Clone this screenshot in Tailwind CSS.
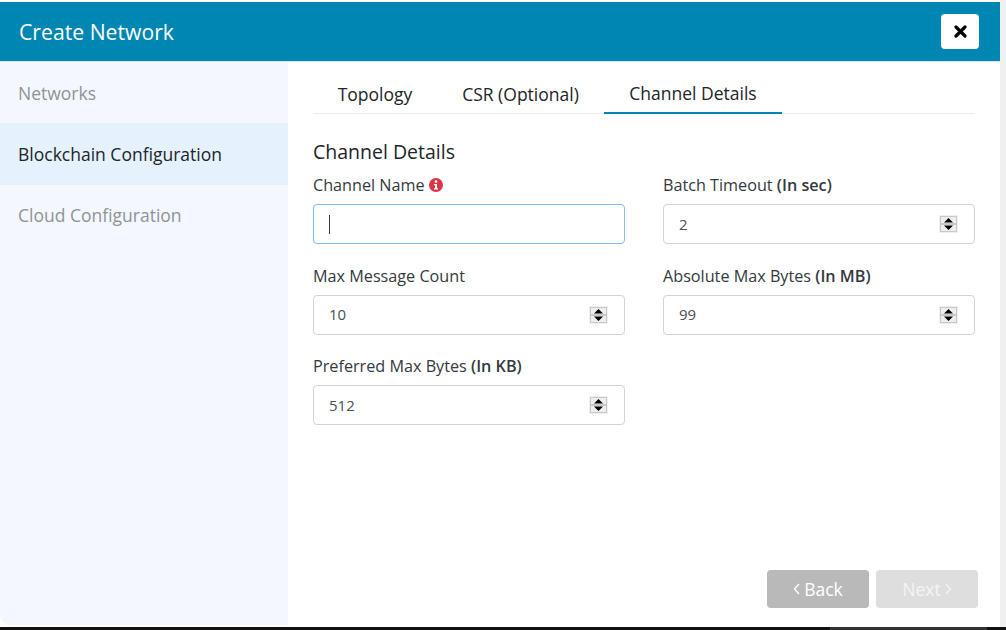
<!doctype html>
<html>
<head>
<meta charset="utf-8">
<script src="https://cdn.jsdelivr.net/npm/@tailwindcss/browser@4"></script>
</head>
<body class="m-0 overflow-hidden bg-white font-['Open_Sans',sans-serif]">
<div class="flex h-[630px] w-[1006px] flex-col overflow-hidden">
  <div class="flex flex-1 min-h-0">
    <div class="flex h-[627px] w-[1000px] flex-col pt-[2px]">
      <header class="flex h-[60px] shrink-0 items-center justify-between border-b border-[#dee2e6] bg-[#0086b3] pl-[19px] pr-[21px]">
        <h1 class="pt-[1px] text-[21.2px] font-normal text-white">Create Network</h1>
        <button class="-mt-[1px] flex h-[35px] w-[38px] items-center justify-center rounded-[4px] bg-white">
          <svg width="13" height="13" viewBox="0 0 13 13"><path d="M2 2 L11 11 M11 2 L2 11" stroke="#000" stroke-width="3.2" stroke-linecap="round"/></svg>
        </button>
      </header>
      <div class="flex min-h-0 flex-1">
        <nav class="h-[563px] w-[288px] shrink-0 rounded-bl-[10px] bg-[#f4f8fe] text-[17.5px]">
          <div class="flex h-[61px] items-center pl-[18px] pt-[2px] text-[#8f9398]">Networks</div>
          <div class="flex h-[62px] items-center bg-[#e5f1fd] pl-[18px] text-[#212529]">Blockchain Configuration</div>
          <div class="flex h-[61px] items-center pl-[18px] text-[#8f9398]">Cloud Configuration</div>
        </nav>
        <main class="relative flex-1 pl-[25px] pr-[25px]">
          <div class="flex h-[52px] items-end border-b border-[#e9ecef] text-[17.5px] text-[#212529]">
            <div class="flex w-[124px] justify-center pb-[6px]">Topology</div>
            <div class="flex w-[167px] justify-center pb-[6px]">CSR (Optional)</div>
            <div class="-mb-px flex w-[178px] justify-center border-b-2 border-[#0086b3] pb-[6px]">Channel Details</div>
          </div>
          <h2 class="mt-[24px] text-[19.5px] leading-[27px] font-normal text-[#212529]">Channel Details</h2>
          <div class="mt-[10px] grid grid-cols-[312px_312px] gap-x-[38px] gap-y-[21.5px] text-[16.2px] text-[#343a40]">
            <label class="block">
              <span class="flex h-[20px] items-center gap-[4px] leading-[20px]">Channel Name
                <svg width="14" height="14" viewBox="0 0 14 14"><circle cx="7" cy="7" r="7" fill="#dc3545"/><circle cx="7" cy="3.6" r="1.4" fill="#fff"/><path d="M5 6h3v4.2h1v1.3H5v-1.3h1V7.3H5z" fill="#fff"/></svg>
              </span>
              <div class="mt-[9px] flex h-[40px] items-center rounded-[4px] border border-[#80bdff] bg-white pl-[15px]"><span class="h-[19px] w-px bg-[#343a40]"></span></div>
            </label>
            <label class="block">
              <span class="flex h-[20px] items-center leading-[20px]"><span>Batch Timeout <b class="font-semibold">(In sec)</b></span></span>
              <div class="mt-[9px] flex h-[40px] items-center justify-between rounded-[4px] border border-[#ced4da] bg-white pl-[15px] pr-[16px] text-[15px] text-[#495057]">2
                <svg width="19" height="18" viewBox="0 0 19 18" shape-rendering="crispEdges"><rect width="19" height="18" fill="#f0f0f0"/><rect x="1" y="1" width="17" height="16" fill="#c8c8c8"/><rect x="2" y="2" width="15" height="6" fill="#eeeeee"/><rect x="2" y="10" width="15" height="6" fill="#eeeeee"/><path d="M9.5 3 L14 7.5 H5z M5 10.5 H14 L9.5 15z" fill="#000" shape-rendering="auto"/></svg>
              </div>
            </label>
            <label class="block">
              <span class="flex h-[20px] items-center leading-[20px]">Max Message Count</span>
              <div class="mt-[9px] flex h-[40px] items-center justify-between rounded-[4px] border border-[#ced4da] bg-white pl-[15px] pr-[16px] text-[15px] text-[#495057]">10
                <svg width="19" height="18" viewBox="0 0 19 18" shape-rendering="crispEdges"><rect width="19" height="18" fill="#f0f0f0"/><rect x="1" y="1" width="17" height="16" fill="#c8c8c8"/><rect x="2" y="2" width="15" height="6" fill="#eeeeee"/><rect x="2" y="10" width="15" height="6" fill="#eeeeee"/><path d="M9.5 3 L14 7.5 H5z M5 10.5 H14 L9.5 15z" fill="#000" shape-rendering="auto"/></svg>
              </div>
            </label>
            <label class="block">
              <span class="flex h-[20px] items-center leading-[20px]"><span>Absolute Max Bytes <b class="font-semibold">(In MB)</b></span></span>
              <div class="mt-[9px] flex h-[40px] items-center justify-between rounded-[4px] border border-[#ced4da] bg-white pl-[15px] pr-[16px] text-[15px] text-[#495057]">99
                <svg width="19" height="18" viewBox="0 0 19 18" shape-rendering="crispEdges"><rect width="19" height="18" fill="#f0f0f0"/><rect x="1" y="1" width="17" height="16" fill="#c8c8c8"/><rect x="2" y="2" width="15" height="6" fill="#eeeeee"/><rect x="2" y="10" width="15" height="6" fill="#eeeeee"/><path d="M9.5 3 L14 7.5 H5z M5 10.5 H14 L9.5 15z" fill="#000" shape-rendering="auto"/></svg>
              </div>
            </label>
            <label class="block">
              <span class="flex h-[20px] items-center leading-[20px]"><span>Preferred Max Bytes <b class="font-semibold">(In KB)</b></span></span>
              <div class="mt-[9px] flex h-[40px] items-center justify-between rounded-[4px] border border-[#ced4da] bg-white pl-[15px] pr-[16px] text-[15px] text-[#495057]">512
                <svg width="19" height="18" viewBox="0 0 19 18" shape-rendering="crispEdges"><rect width="19" height="18" fill="#f0f0f0"/><rect x="1" y="1" width="17" height="16" fill="#c8c8c8"/><rect x="2" y="2" width="15" height="6" fill="#eeeeee"/><rect x="2" y="10" width="15" height="6" fill="#eeeeee"/><path d="M9.5 3 L14 7.5 H5z M5 10.5 H14 L9.5 15z" fill="#000" shape-rendering="auto"/></svg>
              </div>
            </label>
          </div>
          <div class="absolute right-[22px] top-[508px] flex gap-[7px] text-[17.5px] text-white">
            <button class="flex h-[38px] w-[102px] items-center justify-center gap-[4px] rounded-[4px] bg-[#b9b9b9]">
              <svg width="7" height="12" viewBox="0 0 7 12"><path d="M6 1 L1.5 6 L6 11" fill="none" stroke="#fff" stroke-width="1.3"/></svg>Back</button>
            <button class="flex h-[38px] w-[102px] items-center justify-center gap-[4px] rounded-[4px] bg-[#dedede] text-[#f4f4f4]">Next
              <svg width="7" height="12" viewBox="0 0 7 12"><path d="M1 1 L5.5 6 L1 11" fill="none" stroke="#f4f4f4" stroke-width="1.3"/></svg></button>
          </div>
        </main>
      </div>
    </div>
    <div class="w-[6px] bg-[#f0f0f0]"></div>
  </div>
  <div class="flex h-[3px] shrink-0 bg-[#111]">
    <div class="ml-[830px] w-[157px] bg-[#333]"></div>
  </div>
</div>
</body>
</html>
